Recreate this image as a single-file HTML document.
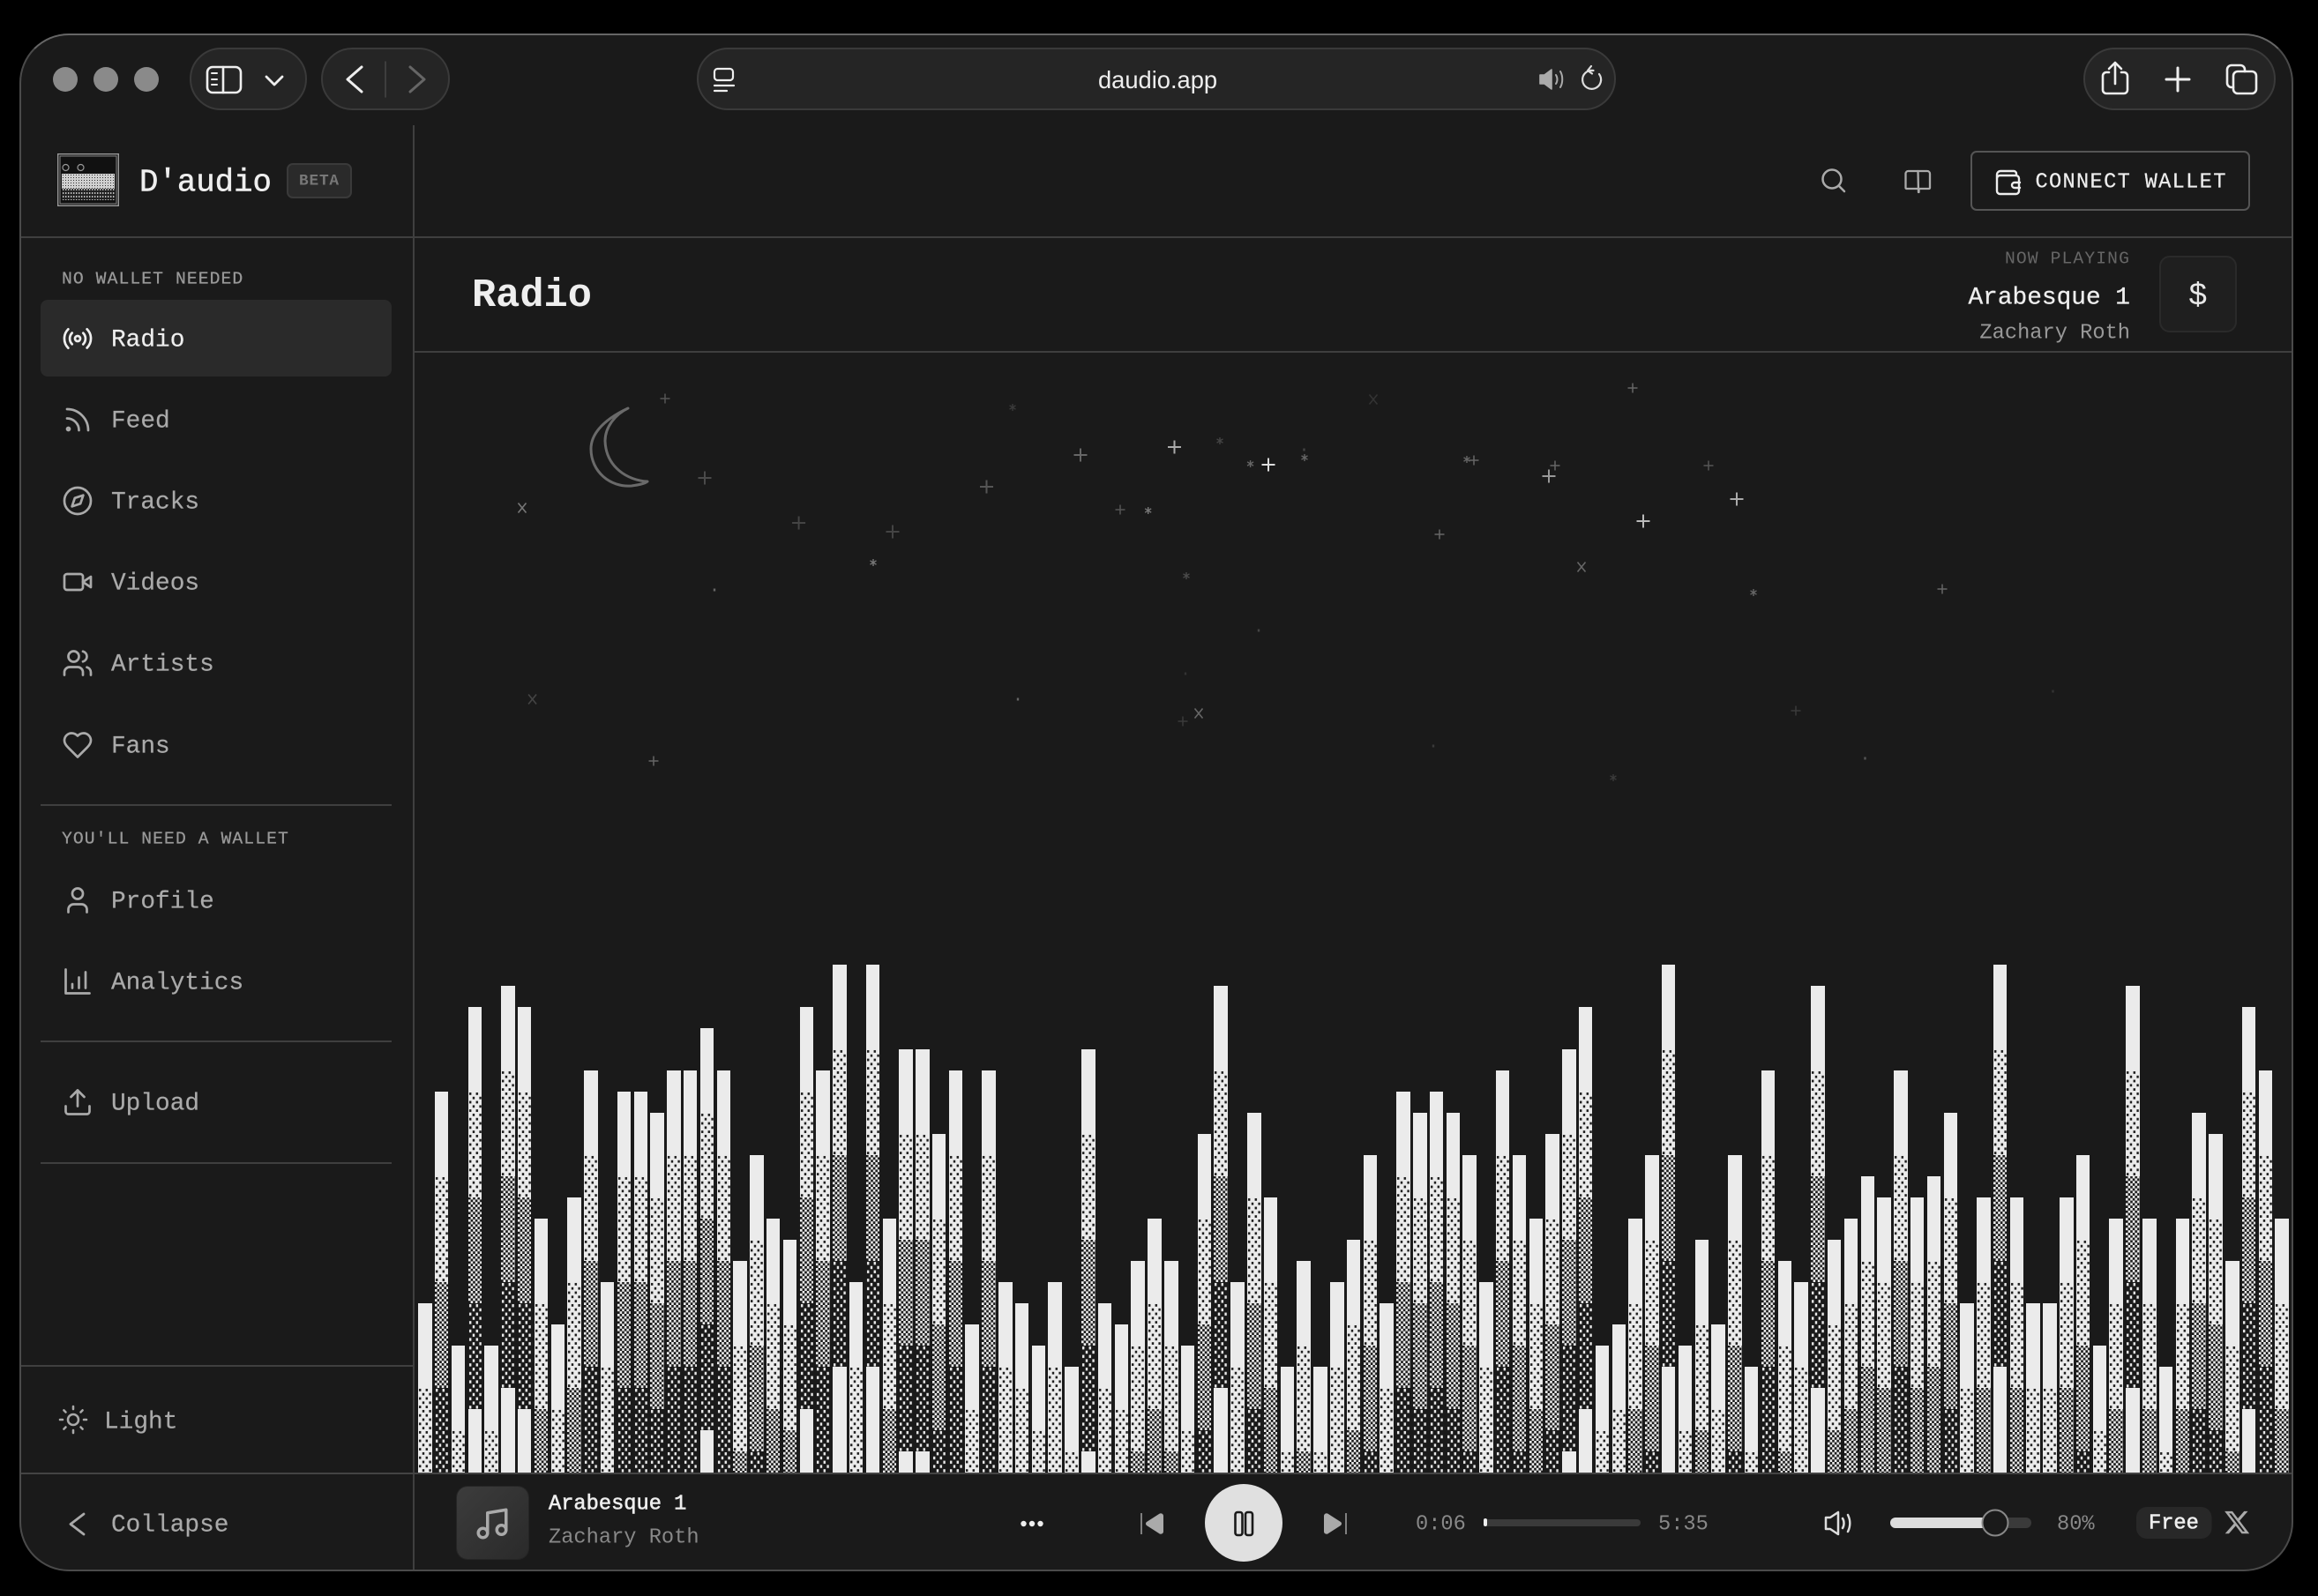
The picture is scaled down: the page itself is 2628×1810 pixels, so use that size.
<!DOCTYPE html>
<html><head><meta charset="utf-8"><title>D'audio</title>
<style>
html,body{margin:0;padding:0;background:#000;width:2628px;height:1810px;overflow:hidden}
#w{position:absolute;left:0;top:0;width:2628px;height:1810px;clip-path:inset(38px 28px 28px 22px round 56px);background:#1a1a1a;font-family:"Liberation Mono",monospace;overflow:hidden}
#bd{position:absolute;left:22px;top:38px;width:2578px;height:1744px;box-sizing:border-box;border:2px solid #4a4a4a;border-top-color:#666;border-radius:56px;pointer-events:none}
.t{position:absolute;white-space:pre;line-height:1;transform:translateY(calc(-50% + 2.5px))}
.n{font-size:27.8px;color:#aaa;left:126px;-webkit-text-stroke:.2px currentColor}
.l{font-size:19.7px;letter-spacing:1.08px;color:#999;-webkit-text-stroke:.25px currentColor}
.m{font-weight:400;-webkit-text-stroke:.5px currentColor}
.i{position:absolute;fill:none;stroke:currentColor;stroke-linecap:round;stroke-linejoin:round;overflow:visible}
.h{position:absolute;height:2px;background:#3f3f3f}
.v{position:absolute;width:2px;background:#3f3f3f}
.g{position:absolute;top:54px;height:71px;box-sizing:border-box;background:#252525;border:2px solid #3a3a3a;border-radius:36px}
#bars{position:absolute;left:474.2px;top:0;height:1670px;display:flex;align-items:flex-end;gap:3.31px}
#bars svg{flex:none;width:15.5px;display:block}
</style></head><body>
<svg width="0" height="0" style="position:absolute">
<defs>
<pattern id="pl" width="7.6" height="9.6" patternUnits="userSpaceOnUse"><rect width="7.6" height="9.6" fill="#ebebeb"/><rect x="1" y="1" width="2.4" height="2.8" fill="#1a1a1a"/><rect x="4.8" y="5.8" width="2.4" height="2.8" fill="#1a1a1a"/></pattern>
<pattern id="pm" width="5.2" height="5.6" patternUnits="userSpaceOnUse"><rect width="5.2" height="5.6" fill="#1a1a1a"/><rect width="2.6" height="2.8" fill="#ebebeb"/><rect x="2.6" y="2.8" width="2.6" height="2.8" fill="#ebebeb"/></pattern>
<pattern id="pd" width="7.6" height="9.6" patternUnits="userSpaceOnUse"><rect width="7.6" height="9.6" fill="#1a1a1a"/><rect x="1" y="1" width="2.4" height="3.4" fill="#ebebeb"/><rect x="4.8" y="5.8" width="2.4" height="3.4" fill="#ebebeb"/></pattern>
<pattern id="lg" width="3" height="3" patternUnits="userSpaceOnUse"><rect width="3" height="3" fill="#d0d0d0"/><rect width="1" height="1" fill="#333"/></pattern>
<pattern id="ld" width="3" height="4" patternUnits="userSpaceOnUse"><rect width="3" height="4" fill="#222"/><rect width="1.4" height="2" fill="#bbb"/></pattern>
<rect id="W" width="16" height="96" fill="#ebebeb"/>
<rect id="L" y="96" width="16" height="120" fill="url(#pl)"/>
<rect id="M" y="216" width="16" height="120" fill="url(#pm)"/>
<rect id="D" y="336" width="16" height="120" fill="url(#pd)"/>
<g id="c120"><use href="#W"/><rect y="96" width="16" height="24" fill="url(#pl)"/></g>
<g id="c144"><use href="#W"/><rect y="96" width="16" height="48" fill="url(#pl)"/></g>
<g id="c168"><use href="#W"/><rect y="96" width="16" height="72" fill="url(#pl)"/></g>
<g id="c192"><use href="#W"/><rect y="96" width="16" height="96" fill="url(#pl)"/></g>
<g id="c216"><use href="#W"/><use href="#L"/></g>
<g id="c240"><use href="#c216"/><rect y="216" width="16" height="24" fill="url(#pm)"/></g>
<g id="c264"><use href="#c216"/><rect y="216" width="16" height="48" fill="url(#pm)"/></g>
<g id="c288"><use href="#c216"/><rect y="216" width="16" height="72" fill="url(#pm)"/></g>
<g id="c312"><use href="#c216"/><rect y="216" width="16" height="96" fill="url(#pm)"/></g>
<g id="c336"><use href="#c216"/><use href="#M"/></g>
<g id="c360"><use href="#c336"/><rect y="336" width="16" height="24" fill="url(#pd)"/></g>
<g id="c384"><use href="#c336"/><rect y="336" width="16" height="48" fill="url(#pd)"/></g>
<g id="c408"><use href="#c336"/><rect y="336" width="16" height="72" fill="url(#pd)"/></g>
<g id="c432"><use href="#c336"/><rect y="336" width="16" height="96" fill="url(#pd)"/></g>
<g id="c456"><use href="#c336"/><use href="#D"/></g>
<g id="c480"><use href="#c456"/><rect y="456" width="16" height="24" fill="#ebebeb"/></g>
<g id="c504"><use href="#c456"/><rect y="456" width="16" height="48" fill="#ebebeb"/></g>
<g id="c528"><use href="#c456"/><rect y="456" width="16" height="72" fill="#ebebeb"/></g>
<g id="c552"><use href="#c456"/><rect y="456" width="16" height="96" fill="#ebebeb"/></g>
<g id="c576"><use href="#c456"/><rect y="456" width="16" height="120" fill="#ebebeb"/></g>
<path id="p" d="M-7.5 0h15M0-7.5v15" stroke-width="2" fill="none"/>
<path id="q" d="M-5.5 0h11M0-5.5v11" stroke-width="1.5" fill="none"/>
<path id="x" d="M-4.5-5.5L4.5 5.500M4.500-5.500L-4.500 5.500" stroke-width="1.600" fill="none"/>
<path id="s" d="M0-4v8M-3.5-2.2l7 4.4M3.5-2.2l-7 4.4" stroke-width="1.4" fill="none"/>
<path id="d" d="M0-1.5v3" stroke-width="2.4" fill="none"/>
</defs></svg>
<div id="w">

<!-- traffic lights -->
<svg style="position:absolute;left:0;top:0" width="300" height="140"><circle cx="74" cy="90" r="14" fill="#8a8a8a"/><circle cx="120" cy="90" r="14" fill="#8a8a8a"/><circle cx="166" cy="90" r="14" fill="#8a8a8a"/></svg>

<!-- toolbar groups -->
<div class="g" style="left:215px;width:133px"></div>
<div class="g" style="left:364px;width:146px"></div>
<div class="g" style="left:790px;width:1042px"></div>
<div class="g" style="left:2362px;width:218px"></div>

<svg class="i" style="left:0;top:0;color:#eee" width="2628" height="140">
 <g stroke-width="2.6"><rect x="235" y="76" width="38" height="29" rx="6"/><path d="M253 76v29"/><path d="M240 83h6M240 90h6M240 96h6" stroke-width="2"/></g>
 <path d="M302 87l9 9 9-9" stroke-width="2.8"/>
 <path d="M410 76l-16 14 16 14" stroke-width="3"/>
 <path d="M437 70v40" stroke="#444" stroke-width="1.6"/>
 <path d="M465 76l16 14-16 14" stroke="#666" stroke-width="3"/>
 <g stroke-width="2.2"><rect x="810" y="78" width="21" height="13" rx="3.5"/><path d="M810 97h22M810 103h14"/></g>
 <path d="M1746 85h5l8-6v22l-8-6h-5z" fill="#aaa" stroke="#aaa" stroke-width="1.6"/>
 <path d="M1764 85c2 3 2 7 0 10M1769 81c3 5 3 13 0 18" stroke="#aaa" stroke-width="2"/>
 <path d="M1813 84a10.500 10.500 0 1 1-6.500-4h-5" stroke="#ddd" stroke-width="2.2"/><path d="M1804 75l-4 5 5 3.500" stroke="#ddd" stroke-width="2.2"/>
 <g stroke-width="2.6"><path d="M2391 82h-3a4 4 0 0 0-4 4v16a4 4 0 0 0 4 4h20a4 4 0 0 0 4-4V86a4 4 0 0 0-4-4h-3"/><path d="M2398 71v24M2391 78l7-7 7 7"/></g>
 <path d="M2469 77v26M2456 90h26" stroke-width="3"/>
 <g stroke-width="2.600"><path d="M2532 99h-2a5 5 0 0 1-5-5V79a5 5 0 0 1 5-5h10a5 5 0 0 1 5 5v2"/><rect x="2532" y="81" width="26" height="25" rx="5"/></g>
</svg>
<div class="t" style="left:1245px;top:87.5px;font:27.3px/1 'Liberation Sans',sans-serif;color:#eee">daudio.app</div>

<!-- structure lines -->
<div class="v" style="left:468px;top:142px;height:1640px"></div>
<div class="h" style="left:22px;top:268px;width:2578px"></div>
<div class="h" style="left:470px;top:398px;width:2130px"></div>
<div class="h" style="left:22px;top:1548px;width:447px"></div>
<div class="h" style="left:22px;top:1670px;width:2578px;z-index:3;background:#444"></div>

<!-- logo -->
<svg style="position:absolute;left:65px;top:174px" width="70" height="60" viewBox="0 0 70 60"><rect x=".7" y=".7" width="68.600" height="58.600" fill="#111" stroke="#999" stroke-width="1.400"/><rect x="3" y="3" width="64" height="54" fill="none" stroke="#888"/><circle cx="9.500" cy="16" r="3.500" fill="none" stroke="#999" stroke-width="1.200"/><circle cx="26.500" cy="16" r="3.500" fill="none" stroke="#999" stroke-width="1.200"/><rect x="5" y="23" width="60" height="17" fill="url(#lg)"/><rect x="5" y="40" width="60" height="13" fill="url(#ld)"/></svg>
<div class="t m" style="left:158px;top:204.500px;font-size:35.7px;color:#eee">D'audio</div>
<div style="position:absolute;left:325px;top:185px;width:74px;height:40px;box-sizing:border-box;background:#2a2a2a;border:2px solid #3a3a3a;border-radius:7px"></div>
<div class="t" style="left:339px;top:204px;font-size:17.8px;letter-spacing:.8px;color:#777;font-weight:700">BETA</div>

<!-- sidebar -->
<div class="t l" style="left:70px;top:315px">NO WALLET NEEDED</div>
<div style="position:absolute;left:46px;top:340px;width:398px;height:87px;background:#2a2a2a;border-radius:8px"></div>
<svg class="i" style="left:70px;top:366px;color:#eee" width="36" height="36" viewBox="0 0 24 24" stroke-width="1.8"><path d="M4.900 19.100C1 15.200 1 8.800 4.900 4.900"/><path d="M7.800 16.200c-2.300-2.300-2.300-6.100 0-8.500"/><circle cx="12" cy="12" r="2"/><path d="M16.200 7.800c2.300 2.300 2.300 6.100 0 8.500"/><path d="M19.100 4.900C23 8.800 23 15.100 19.100 19"/></svg>
<div class="t n" style="top:384px;color:#eee">Radio</div>

<svg class="i" style="left:70px;top:458px;color:#aaa" width="36" height="36" viewBox="0 0 24 24" stroke-width="1.800"><path d="M4 11a9 9 0 0 1 9 9"/><path d="M4 4a16 16 0 0 1 16 16"/><circle cx="5" cy="19" r="1"/></svg>
<div class="t n" style="top:476px">Feed</div>
<svg class="i" style="left:70px;top:550px;color:#aaa" width="36" height="36" viewBox="0 0 24 24" stroke-width="1.800"><path d="m16.240 7.760-2.120 6.360-6.360 2.120 2.120-6.360 6.360-2.120z"/><circle cx="12" cy="12" r="10"/></svg>
<div class="t n" style="top:568px">Tracks</div>
<svg class="i" style="left:70px;top:642px;color:#aaa" width="36" height="36" viewBox="0 0 24 24" stroke-width="1.800"><path d="m22 8-6 4 6 4V8Z"/><rect width="14" height="12" x="2" y="6" rx="2"/></svg>
<div class="t n" style="top:660px">Videos</div>
<svg class="i" style="left:70px;top:734px;color:#aaa" width="36" height="36" viewBox="0 0 24 24" stroke-width="1.800"><path d="M16 21v-2a4 4 0 0 0-4-4H6a4 4 0 0 0-4 4v2"/><circle cx="9" cy="7" r="4"/><path d="M22 21v-2a4 4 0 0 0-3-3.870"/><path d="M16 3.130a4 4 0 0 1 0 7.750"/></svg>
<div class="t n" style="top:752px">Artists</div>
<svg class="i" style="left:70px;top:827px;color:#aaa" width="36" height="36" viewBox="0 0 24 24" stroke-width="1.800"><path d="M19 14c1.490-1.460 3-3.210 3-5.500A5.500 5.500 0 0 0 16.500 3c-1.760 0-3 .5-4.500 2-1.500-1.500-2.740-2-4.500-2A5.500 5.500 0 0 0 2 8.500c0 2.300 1.500 4.050 3 5.500l7 7Z"/></svg>
<div class="t n" style="top:845px">Fans</div>

<div class="h" style="left:46px;top:912px;width:398px"></div>
<div class="t l" style="left:70px;top:949.500px">YOU'LL NEED A WALLET</div>
<svg class="i" style="left:70px;top:1003px;color:#aaa" width="36" height="36" viewBox="0 0 24 24" stroke-width="1.800"><path d="M19 21v-2a4 4 0 0 0-4-4H9a4 4 0 0 0-4 4v2"/><circle cx="12" cy="7" r="4"/></svg>
<div class="t n" style="top:1021px">Profile</div>
<svg class="i" style="left:70px;top:1095px;color:#aaa" width="36" height="36" viewBox="0 0 24 24" stroke-width="1.800"><path d="M3 3v18h18"/><path d="M13 17V9"/><path d="M18 17V5"/><path d="M8 17v-3"/></svg>
<div class="t n" style="top:1113px">Analytics</div>
<div class="h" style="left:46px;top:1180px;width:398px"></div>
<svg class="i" style="left:70px;top:1232px;color:#aaa" width="36" height="36" viewBox="0 0 24 24" stroke-width="1.800"><path d="M21 15v4a2 2 0 0 1-2 2H5a2 2 0 0 1-2-2v-4"/><polyline points="17 8 12 3 7 8"/><line x1="12" x2="12" y1="3" y2="15"/></svg>
<div class="t n" style="top:1250px">Upload</div>
<div class="h" style="left:46px;top:1318px;width:398px"></div>

<svg class="i" style="left:65px;top:1592px;color:#aaa" width="36" height="36" viewBox="0 0 24 24" stroke-width="1.700"><circle cx="12" cy="12" r="4"/><path d="M12 2v2"/><path d="M12 20v2"/><path d="m4.930 4.930 1.410 1.410"/><path d="m17.660 17.660 1.410 1.410"/><path d="M2 12h2"/><path d="M20 12h2"/><path d="m6.340 17.660-1.410 1.410"/><path d="m19.070 4.930-1.410 1.410"/></svg>
<div class="t n" style="left:118px;top:1610.500px">Light</div>
<svg class="i" style="left:0;top:1700px;color:#aaa" width="120" height="60"><path d="M95 17L80 28.500 95 40" stroke-width="2.800"/></svg>
<div class="t n" style="top:1727.500px">Collapse</div>

<!-- header -->
<svg class="i" style="left:2060px;top:190px;color:#aaa" width="140" height="32"><circle cx="17" cy="13" r="10.500" stroke-width="2.500"/><path d="M25 21l6 6" stroke-width="2.500"/><g stroke-width="2.300"><path d="M114.500 4h-11a3 3 0 0 0-3 3v16a1 1 0 0 0 1 1h13a1 1 0 0 1 1 1v3"/><path d="M115 28v-3a1 1 0 0 1 1-1h11a1 1 0 0 0 1-1V7a3 3 0 0 0-3-3h-10.500z"/></g></svg>
<div style="position:absolute;left:2234px;top:171px;width:317px;height:68px;box-sizing:border-box;border:2px solid #555;border-radius:7px"></div>
<svg class="i" style="left:2262px;top:192px;color:#eee" width="30" height="30" stroke-width="2.400"><rect x="2" y="7" width="25" height="21" rx="3.500"/><path d="M2 10V6a4 4 0 0 1 4-4h15a3 3 0 0 1 3 3v2"/><path d="M28 15h-6a2.500 2.500 0 0 0 0 6h6"/></svg>
<div class="t" style="left:2307.500px;top:204.500px;font-size:23.700px;letter-spacing:1.300px;color:#eee;-webkit-text-stroke:.2px #eee">CONNECT WALLET</div>

<!-- title row -->
<div class="t" style="left:535px;top:333px;font-size:45.300px;font-weight:700;color:#eee">Radio</div>
<div class="t" style="right:213px;top:291.500px;font-size:19.700px;letter-spacing:1.100px;color:#666">NOW PLAYING</div>
<div class="t m" style="right:213px;top:336px;font-size:27.800px;color:#eee;-webkit-text-stroke:.3px #eee">Arabesque 1</div>
<div class="t" style="right:213px;top:375.500px;font-size:23.700px;color:#999">Zachary Roth</div>
<div style="position:absolute;left:2448px;top:290px;width:88px;height:87px;box-sizing:border-box;background:#1f1f1f;border:2px solid #2a2a2a;border-radius:12px"></div>
<div class="t" style="left:2481px;top:333.500px;font-size:36px;color:#e8e8e8">$</div>

<!-- sky -->
<svg class="i" style="left:0;top:0" width="2628" height="1000">
 <path d="M712 463C680 478 670 495 670 509C670 535 692 553 716 551C723 550 730 549 734 546C712 545 687 530 686 500C686 485 697 470 712 463Z" stroke="#6a6a6a" stroke-width="3"/>
 <g stroke-linecap="butt">
 <use href="#q" x="754" y="452" stroke="#555"/><use href="#p" x="799" y="542" stroke="#4a4a4a"/><use href="#x" x="592" y="576" stroke="#777"/><use href="#p" x="905.600" y="593" stroke="#444"/><use href="#p" x="1012" y="603" stroke="#444"/><use href="#s" x="990" y="638" stroke="#777"/><use href="#d" x="810" y="669" stroke="#666"/><use href="#p" x="1225" y="516" stroke="#666"/><use href="#p" x="1118.500" y="552" stroke="#555"/><use href="#p" x="1331.500" y="507" stroke="#aaa"/><use href="#p" x="1438" y="527" stroke="#ddd"/><use href="#s" x="1148" y="462" stroke="#3a3a3a"/><use href="#s" x="1383" y="500" stroke="#444"/><use href="#s" x="1417.600" y="526" stroke="#666"/><use href="#q" x="1270" y="578" stroke="#555"/><use href="#s" x="1301.700" y="579" stroke="#777"/><use href="#s" x="1345" y="653" stroke="#4a4a4a"/><use href="#d" x="1427" y="715" stroke="#444"/><use href="#d" x="1344" y="764" stroke="#333"/><use href="#d" x="1154" y="793" stroke="#666"/><use href="#x" x="1359" y="809" stroke="#666"/><use href="#q" x="1341" y="818" stroke="#3a3a3a"/><use href="#x" x="603.600" y="793" stroke="#444"/><use href="#q" x="741" y="863" stroke="#666"/>
 <use href="#x" x="1557" y="453" stroke="#333"/><use href="#q" x="1851" y="440" stroke="#666"/><use href="#d" x="1478.500" y="510" stroke="#444"/><use href="#s" x="1479" y="519" stroke="#666"/><use href="#s" x="1663" y="521" stroke="#666"/><use href="#q" x="1671" y="522" stroke="#666"/><use href="#q" x="1763" y="528" stroke="#666"/><use href="#p" x="1756" y="540" stroke="#999"/><use href="#q" x="1937" y="528" stroke="#555"/><use href="#p" x="1969" y="566" stroke="#aaa"/><use href="#p" x="1863" y="591" stroke="#bbb"/><use href="#q" x="1632" y="606" stroke="#666"/><use href="#x" x="1793" y="643" stroke="#666"/><use href="#s" x="1988" y="672" stroke="#666"/><use href="#q" x="2202" y="668" stroke="#666"/><use href="#d" x="2327.500" y="784" stroke="#333"/><use href="#q" x="2036" y="806" stroke="#3a3a3a"/><use href="#d" x="1625" y="846" stroke="#3a3a3a"/><use href="#d" x="2114.500" y="860" stroke="#555"/><use href="#s" x="1829" y="882" stroke="#3a3a3a"/>
 </g>
</svg>

<!-- bars -->
<div id="bars">
<svg height="192"><use href="#c192"/></svg><svg height="432"><use href="#c432"/></svg><svg height="144"><use href="#c144"/></svg><svg height="528"><use href="#c528"/></svg><svg height="144"><use href="#c144"/></svg><svg height="552"><use href="#c552"/></svg><svg height="528"><use href="#c528"/></svg><svg height="288"><use href="#c288"/></svg><svg height="168"><use href="#c168"/></svg><svg height="312"><use href="#c312"/></svg>
<svg height="456"><use href="#c456"/></svg><svg height="216"><use href="#c216"/></svg><svg height="432"><use href="#c432"/></svg><svg height="432"><use href="#c432"/></svg><svg height="408"><use href="#c408"/></svg><svg height="456"><use href="#c456"/></svg><svg height="456"><use href="#c456"/></svg><svg height="504"><use href="#c504"/></svg><svg height="456"><use href="#c456"/></svg><svg height="240"><use href="#c240"/></svg>
<svg height="360"><use href="#c360"/></svg><svg height="288"><use href="#c288"/></svg><svg height="264"><use href="#c264"/></svg><svg height="528"><use href="#c528"/></svg><svg height="456"><use href="#c456"/></svg><svg height="576"><use href="#c576"/></svg><svg height="216"><use href="#c216"/></svg><svg height="576"><use href="#c576"/></svg><svg height="288"><use href="#c288"/></svg><svg height="480"><use href="#c480"/></svg>
<svg height="480"><use href="#c480"/></svg><svg height="384"><use href="#c384"/></svg><svg height="456"><use href="#c456"/></svg><svg height="168"><use href="#c168"/></svg><svg height="456"><use href="#c456"/></svg><svg height="216"><use href="#c216"/></svg><svg height="192"><use href="#c192"/></svg><svg height="144"><use href="#c144"/></svg><svg height="216"><use href="#c216"/></svg><svg height="120"><use href="#c120"/></svg>
<svg height="480"><use href="#c480"/></svg><svg height="192"><use href="#c192"/></svg><svg height="168"><use href="#c168"/></svg><svg height="240"><use href="#c240"/></svg><svg height="288"><use href="#c288"/></svg><svg height="240"><use href="#c240"/></svg><svg height="144"><use href="#c144"/></svg><svg height="384"><use href="#c384"/></svg><svg height="552"><use href="#c552"/></svg><svg height="216"><use href="#c216"/></svg>
<svg height="408"><use href="#c408"/></svg><svg height="312"><use href="#c312"/></svg><svg height="120"><use href="#c120"/></svg><svg height="240"><use href="#c240"/></svg><svg height="120"><use href="#c120"/></svg><svg height="216"><use href="#c216"/></svg><svg height="264"><use href="#c264"/></svg><svg height="360"><use href="#c360"/></svg><svg height="192"><use href="#c192"/></svg><svg height="432"><use href="#c432"/></svg>
<svg height="408"><use href="#c408"/></svg><svg height="432"><use href="#c432"/></svg><svg height="408"><use href="#c408"/></svg><svg height="360"><use href="#c360"/></svg><svg height="216"><use href="#c216"/></svg><svg height="456"><use href="#c456"/></svg><svg height="360"><use href="#c360"/></svg><svg height="288"><use href="#c288"/></svg><svg height="384"><use href="#c384"/></svg><svg height="480"><use href="#c480"/></svg>
<svg height="528"><use href="#c528"/></svg><svg height="144"><use href="#c144"/></svg><svg height="168"><use href="#c168"/></svg><svg height="288"><use href="#c288"/></svg><svg height="360"><use href="#c360"/></svg><svg height="576"><use href="#c576"/></svg><svg height="144"><use href="#c144"/></svg><svg height="264"><use href="#c264"/></svg><svg height="168"><use href="#c168"/></svg><svg height="360"><use href="#c360"/></svg>
<svg height="120"><use href="#c120"/></svg><svg height="456"><use href="#c456"/></svg><svg height="240"><use href="#c240"/></svg><svg height="216"><use href="#c216"/></svg><svg height="552"><use href="#c552"/></svg><svg height="264"><use href="#c264"/></svg><svg height="288"><use href="#c288"/></svg><svg height="336"><use href="#c336"/></svg><svg height="312"><use href="#c312"/></svg><svg height="456"><use href="#c456"/></svg>
<svg height="312"><use href="#c312"/></svg><svg height="336"><use href="#c336"/></svg><svg height="408"><use href="#c408"/></svg><svg height="192"><use href="#c192"/></svg><svg height="312"><use href="#c312"/></svg><svg height="576"><use href="#c576"/></svg><svg height="312"><use href="#c312"/></svg><svg height="192"><use href="#c192"/></svg><svg height="192"><use href="#c192"/></svg><svg height="312"><use href="#c312"/></svg>
<svg height="360"><use href="#c360"/></svg><svg height="144"><use href="#c144"/></svg><svg height="288"><use href="#c288"/></svg><svg height="552"><use href="#c552"/></svg><svg height="288"><use href="#c288"/></svg><svg height="120"><use href="#c120"/></svg><svg height="288"><use href="#c288"/></svg><svg height="408"><use href="#c408"/></svg><svg height="384"><use href="#c384"/></svg><svg height="240"><use href="#c240"/></svg>
<svg height="528"><use href="#c528"/></svg><svg height="456"><use href="#c456"/></svg><svg height="288"><use href="#c288"/></svg><svg height="312"><use href="#c312"/></svg>
</div>

<!-- player -->
<div style="position:absolute;left:518px;top:1686px;width:81px;height:82px;border-radius:12px;background:linear-gradient(135deg,#3c3c3c,#2a2a2a);box-shadow:0 0 0 1px #252525"></div>
<svg class="i" style="left:537px;top:1707px;color:#aaa" width="42" height="42" viewBox="0 0 24 24" stroke-width="2"><path d="M9 18V5l12-2v13"/><circle cx="6" cy="18" r="3"/><circle cx="18" cy="16" r="3"/></svg>
<div class="t m" style="left:622px;top:1703.500px;font-size:23.700px;color:#eee;-webkit-text-stroke:.6px #eee">Arabesque 1</div>
<div class="t" style="left:622px;top:1742px;font-size:23.700px;color:#888">Zachary Roth</div>

<svg style="position:absolute;left:0;top:1680px" width="2628" height="100">
 <circle cx="1160.500" cy="48" r="3.200" fill="#eee"/><circle cx="1170" cy="48" r="3.200" fill="#eee"/><circle cx="1179.500" cy="48" r="3.200" fill="#eee"/>
 <path d="M1294 36v24" stroke="#999" stroke-width="1.600"/>
 <path d="M1319 39v18a3 3 0 0 1-5 2l-14-9a2.500 2.500 0 0 1 0-4l14-9a3 3 0 0 1 5 2z" fill="#aaa"/>
 <circle cx="1410" cy="47" r="44" fill="#e0e0e0"/>
 <g fill="none" stroke="#1a1a1a" stroke-width="2.600"><rect x="1400.500" y="35" width="8" height="26" rx="2.500"/><rect x="1412" y="35" width="8" height="26" rx="2.500"/></g>
 <path d="M1526 36v24" stroke="#999" stroke-width="1.600"/>
 <path d="M1501 39v18a3 3 0 0 0 5 2l14-9a2.500 2.500 0 0 0 0-4l-14-9a3 3 0 0 0-5 2z" fill="#aaa"/>
 <rect x="1682" y="43" width="178" height="8" rx="4" fill="#3a3a3a"/><rect x="1682" y="42" width="4" height="9" rx="2" fill="#eee"/>
 <g fill="none" stroke="#ddd" stroke-linecap="round" stroke-linejoin="round" stroke-width="2.500"><path d="M2070 41h5l9-6v25l-9-6h-5z"/><path d="M2089 42c2 3 2 8 0 11M2095 38c3 6 3 13 0 19"/></g>
 <rect x="2143" y="41" width="160" height="12" rx="6" fill="#3a3a3a"/><rect x="2143" y="41" width="119" height="12" rx="6" fill="#ddd"/>
 <circle cx="2262" cy="47" r="14.500" fill="#1a1a1a" stroke="#888" stroke-width="2"/>
 <rect x="2422" y="29" width="85.500" height="36" rx="12" fill="#282828"/>
 <g transform="translate(2520.500,31) scale(1.300)"><path fill="#aaa" d="M18.244 2.250h3.308l-7.227 8.260 8.502 11.240H16.170l-5.214-6.817L4.990 21.750H1.680l7.730-8.835L1.254 2.250H8.080l4.713 6.231zm-1.161 17.520h1.833L7.084 4.126H5.117z"/></g>
</svg>
<div class="t" style="left:1605px;top:1726.500px;font-size:23.700px;color:#888">0:06</div>
<div class="t" style="left:1880px;top:1726.500px;font-size:23.700px;color:#888">5:35</div>
<div class="t" style="left:2332px;top:1726.500px;font-size:23.700px;color:#888">80%</div>
<div class="t m" style="left:2436px;top:1726px;font-size:23.700px;color:#eee;-webkit-text-stroke:.6px #eee">Free</div>
</div>
<div id="bd"></div>
</body></html>
